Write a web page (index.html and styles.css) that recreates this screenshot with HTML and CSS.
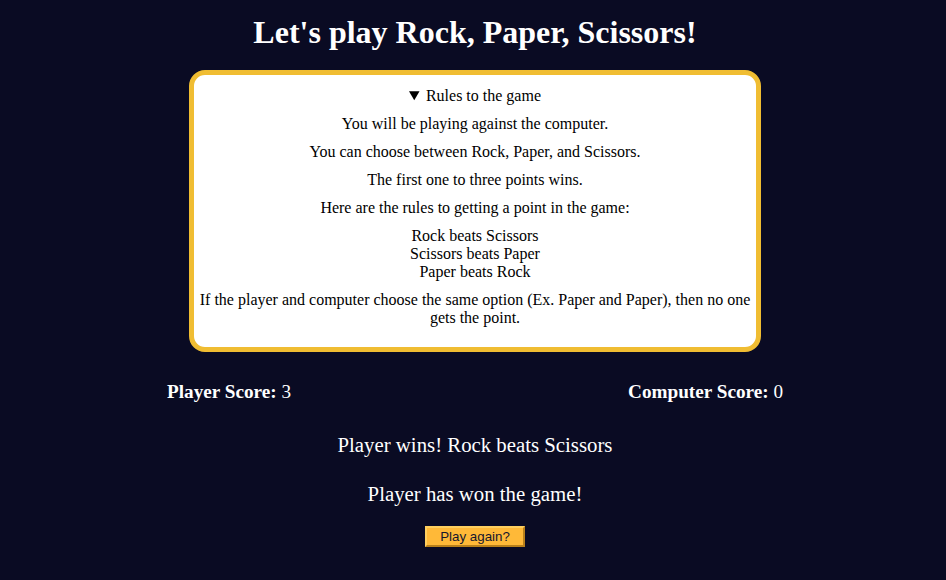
FILE: index.html
```html
<!DOCTYPE html>
<html>
<head>
<meta charset="utf-8">
<link rel="stylesheet" href="styles.css">
</head>
<body>
<main class="page">
  <h1 class="title">Let's play Rock, Paper, Scissors!</h1>
  <details class="rules" open>
    <summary class="rules-summary">Rules to the game</summary>
    <p class="rule">You will be playing against the computer.</p>
    <p class="rule">You can choose between Rock, Paper, and Scissors.</p>
    <p class="rule">The first one to three points wins.</p>
    <p class="rule">Here are the rules to getting a point in the game:</p>
    <p class="rule">Rock beats Scissors<br>Scissors beats Paper<br>Paper beats Rock</p>
    <p class="rule">If the player and computer choose the same option (Ex. Paper and Paper), then no one gets the point.</p>
  </details>
  <div class="scores">
    <div class="score">Player Score: <span class="score-value">3</span></div>
    <div class="score">Computer Score: <span class="score-value">0</span></div>
  </div>
  <p class="result">Player wins! Rock beats Scissors</p>
  <p class="result final">Player has won the game!</p>
  <button class="again" type="button">Play again?</button>
</main>
</body>
</html>
```
FILE: styles.css
```css
html, body {
  margin: 0;
  padding: 0;
  background: #0a0b23;
}
body {
  font-family: "Liberation Serif", "Times New Roman", serif;
  color: #ffffff;
}
.page {
  display: flex;
  flex-direction: column;
  align-items: center;
  padding-top: 14px;
  padding-left: 4px;
}
.title {
  font-size: 32px;
  font-weight: bold;
  margin: 0 0 19px;
  line-height: 37px;
}
.rules {
  box-sizing: border-box;
  width: 572px;
  background: #ffffff;
  color: #000000;
  border: 5px solid #f0bd32;
  border-radius: 16px;
  padding: 12px 3px 20px;
  text-align: center;
  font-size: 16px;
  line-height: 18px;
}
.rules-summary {
  cursor: pointer;
  list-style-position: inside;
}
.rule {
  margin: 10px 0 0;
}
.scores {
  width: 616px;
  display: flex;
  justify-content: space-between;
  margin-top: 29px;
  font-size: 19.2px;
  font-weight: bold;
  line-height: 22px;
}
.score-value {
  font-weight: normal;
}
.result {
  font-size: 20.8px;
  line-height: 24px;
  margin: 30px 0 0;
}
.final {
  margin-top: 25px;
}
.again {
  margin-top: 20px;
  width: 100px;
  height: 21px;
  padding: 0;
  font-family: "Liberation Sans", Arial, sans-serif;
  font-size: 13.33px;
  color: #15172e;
  background: #ffb938;
  border: 2px solid #f7c04a;
  border-top-color: #ffcf5e;
  border-left-color: #ffcf5e;
  border-right-color: #b9801a;
  border-bottom-color: #b9801a;
}
```
